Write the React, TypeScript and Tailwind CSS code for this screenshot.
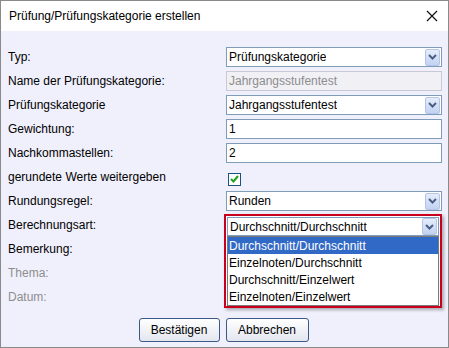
import React from "react";

const rows = [
  "Durchschnitt/Durchschnitt",
  "Einzelnoten/Durchschnitt",
  "Durchschnitt/Einzelwert",
  "Einzelnoten/Einzelwert",
];

function Chevron() {
  return (
    <div className="flex h-[17px] w-[15px] items-center justify-center rounded-[2px] border border-[#b4c6e8] bg-gradient-to-b from-[#e6edfb] to-[#c3d2f0]">
      <svg width="9" height="6" viewBox="0 0 9 6">
        <path d="M1 1 L4.5 4.5 L8 1" fill="none" stroke="#4a5f86" strokeWidth="2" />
      </svg>
    </div>
  );
}

function Select({ value, small = false }: { value: string; small?: boolean }) {
  return (
    <div
      className={`flex w-full items-center justify-between border border-[#7f9db9] bg-white pl-[2px] pr-[1px] ${
        small ? "h-[19px]" : "h-[20px]"
      }`}
    >
      <span className="truncate">{value}</span>
      <Chevron />
    </div>
  );
}

function TextInput({ value, disabled = false }: { value: string; disabled?: boolean }) {
  return (
    <div
      className={`flex h-[20px] w-full items-center border pl-[2px] ${
        disabled ? "border-[#c9c9d3] bg-[#f0f0f5] text-[#8d8d8d]" : "border-[#7f9db9] bg-white"
      }`}
    >
      {value}
    </div>
  );
}

function Row({ label, gray = false, children }: { label: string; gray?: boolean; children?: React.ReactNode }) {
  return (
    <div className="flex h-[20px] items-center">
      <div className={`w-[218px] shrink-0 ${gray ? "text-[#8d8d8d]" : "text-black"}`}>{label}</div>
      <div className="relative flex h-[20px] w-[216px] items-center">{children}</div>
    </div>
  );
}

export default function App() {
  return (
    <div
      className="flex h-[348px] w-[449px] flex-col border border-[#8a8a8a] bg-white text-[12px] text-black"
      style={{ fontFamily: '"Liberation Sans", Arial, sans-serif' }}
    >
      {/* Title bar */}
      <div className="flex h-[30px] shrink-0 items-center justify-between pl-[8px] pr-[10px]">
        <span className="text-[12px]">Prüfung/Prüfungskategorie erstellen</span>
        <svg width="12" height="12" viewBox="0 0 12 12">
          <path d="M1 1 L11 11 M11 1 L1 11" stroke="#111" strokeWidth="1.2" />
        </svg>
      </div>

      {/* Body */}
      <div className="flex flex-1 flex-col bg-[#f0f0fc] pl-[7px] pt-[16px]">
        <div className="flex flex-col gap-[4px]">
          <Row label="Typ:">
            <Select value="Prüfungskategorie" />
          </Row>
          <Row label="Name der Prüfungskategorie:">
            <TextInput value="Jahrgangsstufentest" disabled />
          </Row>
          <Row label="Prüfungskategorie">
            <Select value="Jahrgangsstufentest" />
          </Row>
          <Row label="Gewichtung:">
            <TextInput value="1" />
          </Row>
          <Row label="Nachkommastellen:">
            <TextInput value="2" />
          </Row>
          <Row label="gerundete Werte weitergeben">
            <div className="ml-[2px] mt-[4px] flex h-[13px] w-[13px] items-center justify-center border border-[#1c5180] bg-white">
              <svg width="9" height="8" viewBox="0 0 9 8">
                <path d="M1 4 L3.5 6.5 L8 1" fill="none" stroke="#21a121" strokeWidth="2" />
              </svg>
            </div>
          </Row>
          <Row label="Rundungsregel:">
            <Select value="Runden" />
          </Row>
          <Row label="Berechnungsart:">
            {/* open dropdown, outlined in red */}
            <div className="absolute left-[-2px] top-[-1px] z-10 flex w-[218px] flex-col border-2 border-[#c8001e] bg-white px-[1px] pt-[1px] shadow-[2px_2px_3px_rgba(0,0,0,0.3)]">
              <Select value="Durchschnitt/Durchschnitt" small />
              <div className="flex flex-col border border-[#7a7a7a] bg-white">
                {rows.map((r, i) => (
                  <div
                    key={r}
                    className={`flex h-[17px] items-center pl-[1px] ${i === 0 ? "bg-[#3169c6] text-white" : ""}`}
                  >
                    {r}
                  </div>
                ))}
              </div>
            </div>
          </Row>
          <Row label="Bemerkung:">
            <TextInput value="" />
          </Row>
          <Row label="Thema:" gray />
          <Row label="Datum:" gray />
        </div>

        <div className="mt-[11px] flex justify-center gap-[6px] pr-[9px]">
          <button className="h-[24px] w-[81px] rounded-[3px] border border-[#3c5a86] bg-gradient-to-b from-white to-[#e3e6ef] text-[12px]">
            Bestätigen
          </button>
          <button className="h-[24px] w-[83px] rounded-[3px] border border-[#3c5a86] bg-gradient-to-b from-white to-[#e3e6ef] text-[12px]">
            Abbrechen
          </button>
        </div>
      </div>
    </div>
  );
}
